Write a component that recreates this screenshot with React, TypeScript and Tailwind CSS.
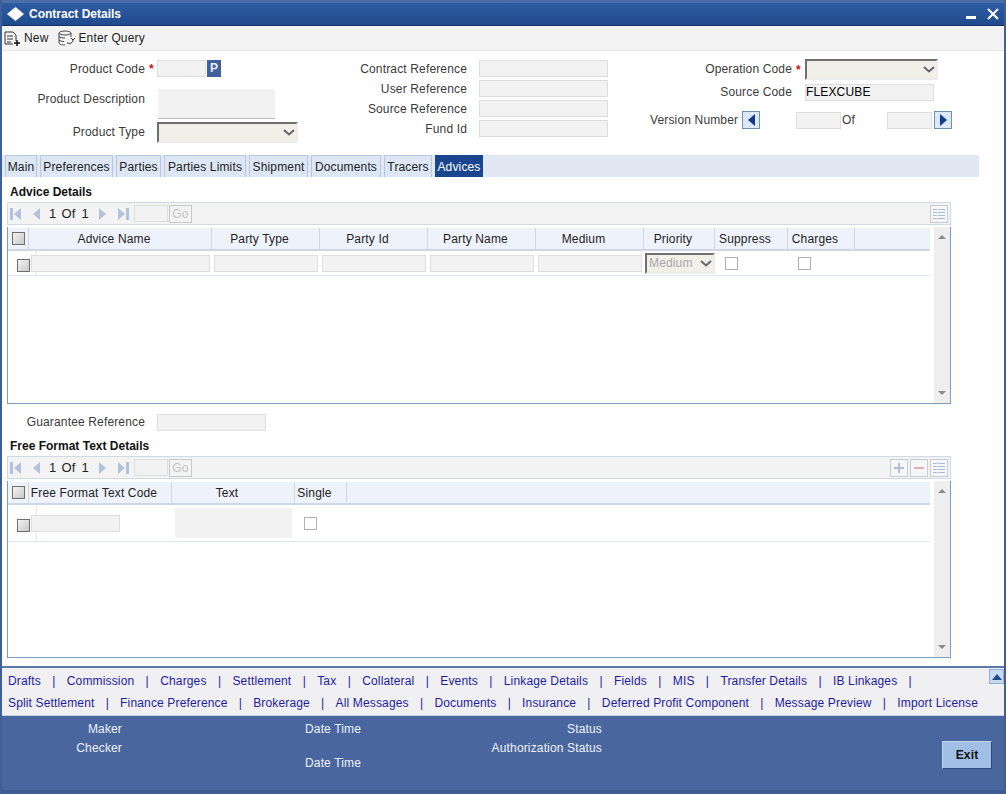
import type { ReactNode } from "react";

const tabs = [
  { label: "Main", w: "w-[32px]" },
  { label: "Preferences", w: "w-[73px]" },
  { label: "Parties", w: "w-[45px]" },
  { label: "Parties Limits", w: "w-[82px]" },
  { label: "Shipment", w: "w-[59px]" },
  { label: "Documents", w: "w-[70px]" },
  { label: "Tracers", w: "w-[48px]" },
  { label: "Advices", w: "w-[48px]" },
];
const linksOne = ["Drafts", "Commission", "Charges", "Settlement", "Tax", "Collateral", "Events", "Linkage Details", "Fields", "MIS", "Transfer Details", "IB Linkages"];
const linksTwo = ["Split Settlement", "Finance Preference", "Brokerage", "All Messages", "Documents", "Insurance", "Deferred Profit Component", "Message Preview", "Import License"];

function Input({ className = "", children }: { className?: string; children?: ReactNode }) {
  return (
    <div className={`h-[17px] shrink-0 bg-[#f2f2f2] border border-[#dedede] text-black leading-[15px] ${className}`}>
      {children}
    </div>
  );
}

function Chevron({ color = "#666" }: { color?: string }) {
  return (
    <svg width="12" height="7" viewBox="0 0 12 7" className="shrink-0">
      <path d="M1 1l5 4.5L11 1" fill="none" stroke={color} strokeWidth="2" />
    </svg>
  );
}

function Select({ className = "", children }: { className?: string; children?: ReactNode }) {
  return (
    <div className={`shrink-0 flex items-center justify-end bg-[#f1efe8] border-t-2 border-l-2 border-t-[#6f6f6f] border-l-[#6f6f6f] border-b-2 border-r-2 border-b-[#ececec] border-r-[#ececec] pr-[1px] ${className}`}>
      {children}
      <Chevron />
    </div>
  );
}

function Star() {
  return <span className="w-[6px] text-[#d01010] font-bold leading-none">*</span>;
}

function Check({ shaded = false, className = "" }: { shaded?: boolean; className?: string }) {
  return (
    <div
      className={`w-[13px] h-[13px] shrink-0 border ${shaded ? "border-[#6e6e6e] bg-gradient-to-br from-[#f4f4f4] to-[#c8c8c8]" : "border-[#b0b0b0] bg-white"} ${className}`}
    />
  );
}

function NavGlyph({ d }: { d: string }) {
  return (
    <svg width="12" height="14" viewBox="0 0 12 14" className="shrink-0">
      <path d={d} fill="#b3c2dc" />
    </svg>
  );
}

function GridIcon() {
  return (
    <div className="w-[18px] h-[18px] border border-[#c6ccd6] bg-[#f6f6f6] flex items-center justify-center">
      <svg width="14" height="12" viewBox="0 0 14 12">
        <path d="M1 1h4v1H1zM6 1h7v1H6zM1 4h4v1H1zM6 4h7v1H6zM1 7h4v1H1zM6 7h7v1H6zM1 10h4v1H1zM6 10h7v1H6z" fill="#a9b8d3" />
      </svg>
    </div>
  );
}

function ToolButton({ path, color }: { path: string; color: string }) {
  return (
    <div className="w-[18px] h-[18px] border border-[#c6ccd6] bg-[#f6f6f6] flex items-center justify-center">
      <svg width="12" height="12" viewBox="0 0 12 12">
        <path d={path} fill={color} />
      </svg>
    </div>
  );
}

function NavBar({ edit = false }: { edit?: boolean }) {
  return (
    <div className="h-[23px] w-[944px] flex items-center bg-[#f3f3f3] border border-[#d3d9e3] pl-[2px] pr-[2px]">
      <NavGlyph d="M0 1h3v12H0zM11 1v12L4 7z" />
      <div className="w-[8px]" />
      <NavGlyph d="M10 1v12L3 7z" />
      <span className="ml-[7px] text-[13px] text-[#222]">1</span>
      <span className="ml-[5px] text-[13px] text-[#222]">Of</span>
      <span className="ml-[6px] text-[13px] text-[#222]">1</span>
      <div className="w-[8px]" />
      <NavGlyph d="M2 1v12l7-6z" />
      <div className="w-[8px]" />
      <NavGlyph d="M1 1v12l7-6zM9 1h3v12H9z" />
      <div className="ml-[5px] w-[34px] h-[17px] bg-[#f2f2f2] border border-[#dedede]" />
      <div className="ml-[1px] w-[23px] h-[18px] border border-[#c9c9c9] flex items-center justify-center text-[#c4c4c4]">Go</div>
      <div className="ml-auto flex gap-[2px]">
        {edit && <ToolButton path="M5 1h2v4h4v2H7v4H5V7H1V5h4z" color="#aebcd6" />}
        {edit && <ToolButton path="M1 5h10v2H1z" color="#e0b0b0" />}
        <GridIcon />
      </div>
    </div>
  );
}

function TableFrame({ head, children }: { head: { label: string; w: string }[]; children: ReactNode }) {
  return (
    <div className="mt-[2px] w-[944px] h-[177px] border-l border-r border-b border-[#7f9dc2] flex">
      <div className="w-[922px] shrink-0 flex flex-col">
        <div className="mt-[1px] h-[23px] flex bg-[#eef2fb] border-b-2 border-[#cfd7e7]">
          <div className="w-[21px] shrink-0 border-r border-[#cfd7e7] flex items-center justify-center">
            <Check shaded />
          </div>
          {head.map((h) => (
            <div key={h.label} className={`${h.w} shrink-0 border-r border-[#cfd7e7] pr-[12px] text-center leading-[22px] text-[#222] whitespace-nowrap`}>
              {h.label}
            </div>
          ))}
        </div>
        {children}
      </div>
      <div className="ml-[4px] w-[16px] flex flex-col items-center justify-between py-[8px] bg-[#eeeeee]">
        <div className="w-0 h-0 border-x-[4px] border-x-transparent border-b-[4px] border-b-[#8a8a8a]" />
        <div className="w-0 h-0 border-x-[4px] border-x-transparent border-t-[4px] border-t-[#8a8a8a]" />
      </div>
    </div>
  );
}

function LinkRow({ items, className = "" }: { items: string[]; className?: string }) {
  return (
    <div className={`flex items-center text-[#1c1c9e] h-[22px] whitespace-nowrap ${className}`}>
      {items.map((t, i) => (
        <span key={t} className="flex items-center gap-[inherit]">
          <span>{t}</span>
          {(i < items.length - 1 || items === linksOne) && <span>|</span>}
        </span>
      ))}
    </div>
  );
}

export default function App() {
  return (
    <div className="w-[1006px] h-[794px] flex flex-col overflow-hidden bg-white border-x-2 border-[#3f5f9b] text-[12px] tracking-[0.15px] text-[#3a3a3a] font-['Liberation_Sans',Arial,sans-serif]">
      {/* title bar */}
      <div className="h-[26px] shrink-0 -mx-[2px] px-[7px] flex items-center bg-gradient-to-b from-[#2f5da3] to-[#1f4a8e] border-t-[3px] border-t-[#4a6ea8] border-b border-b-[#15315f]">
        <svg width="17" height="14" viewBox="0 0 17 14">
          <path d="M8.5 0l8.5 7-8.5 7L0 7z" fill="#fff" />
        </svg>
        <span className="ml-[5px] font-bold text-white tracking-normal">Contract Details</span>
        <div className="ml-auto flex items-center gap-[11px]">
          <div className="mt-[6px] w-[10px] h-[3px] bg-white" />
          <svg width="12" height="12" viewBox="0 0 12 12">
            <path d="M1 1l10 10M11 1L1 11" stroke="#fff" strokeWidth="2" />
          </svg>
        </div>
      </div>

      {/* toolbar */}
      <div className="h-[25px] shrink-0 flex items-center bg-[#f3f3f3] border-b border-[#e6e6e6] pl-[2px] text-[#222]">
        <svg width="17" height="15" viewBox="0 0 17 15">
          <path d="M1 1h8l3 3v6M1 1v12h8M3 5h6M3 8h6M3 11h4" fill="none" stroke="#333" />
          <path d="M13 9v6M10 12h6" stroke="#111" strokeWidth="1.5" />
        </svg>
        <span className="ml-[3px]">New</span>
        <svg width="18" height="16" viewBox="0 0 18 16" className="ml-[9px]">
          <ellipse cx="8" cy="3" rx="6" ry="2" fill="none" stroke="#444" />
          <path d="M2 3v10c0 1 2 2 6 2M14 3v4M2 6.5c1 1 3 1.5 6 1.5M2 10c1 1 3 1.5 5 1.5" fill="none" stroke="#444" />
          <path d="M10 13c3 1 6 0 6-3M14 8l2 2 2-2" fill="none" stroke="#333" />
        </svg>
        <span className="ml-[3px]">Enter Query</span>
      </div>

      {/* header form */}
      <div className="h-[104px] shrink-0 flex">
        <div className="w-[296px] shrink-0 flex flex-col pt-[9px]">
          <div className="flex items-center h-[17px]">
            <span className="w-[143px] text-right">Product Code</span>
            <span className="w-[12px] pl-[4px]"><Star /></span>
            <Input className="w-[49px]" />
            <div className="ml-[1px] w-[14px] h-[17px] bg-[#40619d] text-[#e8edf6] text-center font-bold leading-[17px]">P</div>
          </div>
          <div className="mt-[12px] flex">
            <span className="w-[143px] text-right mt-[1px]">Product Description</span>
            <div className="ml-[13px] w-[117px] h-[30px] bg-[#f2f2f2] border-b border-[#bdbdbd]" />
          </div>
          <div className="mt-[3px] flex items-center">
            <span className="w-[143px] text-right pb-[2px]">Product Type</span>
            <Select className="ml-[12px] w-[141px] h-[21px]" />
          </div>
        </div>
        <div className="w-[310px] shrink-0 flex flex-col pt-[9px] gap-[3px]">
          {["Contract Reference", "User Reference", "Source Reference", "Fund Id"].map((l) => (
            <div key={l} className="flex items-center h-[17px]">
              <span className="w-[171px] text-right">{l}</span>
              <Input className="ml-[12px] w-[129px]" />
            </div>
          ))}
        </div>
        <div className="flex-1 flex flex-col pt-[8px]">
          <div className="flex items-center">
            <span className="w-[184px] text-right pb-[2px]">Operation Code</span>
            <span className="w-[13px] pl-[4px]"><Star /></span>
            <Select className="w-[133px] h-[21px]" />
          </div>
          <div className="mt-[3px] flex items-center">
            <span className="w-[184px] text-right">Source Code</span>
            <Input className="ml-[13px] w-[129px]">FLEXCUBE</Input>
          </div>
          <div className="mt-[10px] flex items-center pl-[42px]">
            <span className="w-[90px] whitespace-nowrap">Version Number</span>
            <div className="ml-[2px] w-[18px] h-[18px] bg-[#dce8f5] border border-[#6d8fb8] flex items-center justify-center">
              <div className="w-0 h-0 border-y-[6px] border-y-transparent border-r-[7px] border-r-[#123c8c]" />
            </div>
            <Input className="ml-[36px] w-[45px]" />
            <span className="ml-[1px] w-[45px]">Of</span>
            <Input className="w-[45px]" />
            <div className="ml-[2px] w-[18px] h-[18px] bg-[#dce8f5] border border-[#6d8fb8] flex items-center justify-center">
              <div className="w-0 h-0 border-y-[6px] border-y-transparent border-l-[7px] border-l-[#123c8c]" />
            </div>
          </div>
        </div>
      </div>

      {/* tabs */}
      <div className="h-[22px] w-[977px] shrink-0 flex gap-[3px] pl-[3px] bg-[#e1e8f4]">
        {tabs.map((t) => (
          <div
            key={t.label}
            className={`${t.w} text-center leading-[22px] border-x border-t whitespace-nowrap ${t.label === "Advices" ? "bg-[#1a4690] border-[#1a4690] text-white" : "bg-[#dce6f5] border-[#b7c7e0] text-[#222]"}`}
          >
            {t.label}
          </div>
        ))}
      </div>

      {/* advice details */}
      <div className="pl-[5px] flex flex-col shrink-0">
        <div className="mt-[8px] ml-[3px] h-[15px] leading-[15px] font-bold text-[#111] tracking-normal">Advice Details</div>
        <div className="mt-[2px]"><NavBar /></div>
        <TableFrame
          head={[
            { label: "Advice Name", w: "w-[183px]" },
            { label: "Party Type", w: "w-[108px]" },
            { label: "Party Id", w: "w-[108px]" },
            { label: "Party Name", w: "w-[108px]" },
            { label: "Medium", w: "w-[108px]" },
            { label: "Priority", w: "w-[71px]" },
            { label: "Suppress", w: "w-[73px]" },
            { label: "Charges", w: "w-[67px]" },
          ]}
        >
          <div className="h-[25px] flex items-center border-b border-[#dfe6f0]">
            <div className="w-[29px] h-full shrink-0 border-r border-[#e3e9f3] flex items-center pl-[9px]">
              <Check shaded className="mt-[4px]" />
            </div>
            <Input className="-ml-[6px] w-[179px]" />
            <Input className="ml-[4px] w-[104px]" />
            <Input className="ml-[4px] w-[104px]" />
            <Input className="ml-[4px] w-[104px]" />
            <Input className="ml-[4px] w-[104px]" />
            <Select className="ml-[3px] w-[70px] h-[21px] pl-[2px]">
              <span className="mr-auto text-[#a8a8a8]">Medium</span>
            </Select>
            <Check className="ml-[10px]" />
            <Check className="ml-[60px]" />
          </div>
        </TableFrame>

        <div className="mt-[9px] flex items-center">
          <span className="w-[138px] text-right">Guarantee Reference</span>
          <Input className="ml-[12px] w-[109px]" />
        </div>

        <div className="mt-[8px] ml-[3px] h-[15px] leading-[15px] font-bold text-[#111] tracking-normal">Free Format Text Details</div>
        <div className="mt-[2px]"><NavBar edit /></div>
        <TableFrame
          head={[
            { label: "Free Format Text Code", w: "w-[143px]" },
            { label: "Text", w: "w-[123px]" },
            { label: "Single", w: "w-[52px]" },
          ]}
        >
          <div className="h-[37px] flex items-center border-b border-[#dfe6f0]">
            <div className="w-[29px] h-full shrink-0 border-r border-[#e3e9f3] flex items-center pl-[9px]">
              <Check shaded className="mt-[4px]" />
            </div>
            <Input className="-ml-[6px] w-[89px]" />
            <div className="ml-[55px] w-[117px] h-[30px] bg-[#f2f2f2]" />
            <Check className="ml-[12px] mt-[1px]" />
          </div>
        </TableFrame>
      </div>

      {/* links */}
      <div className="mt-[8px] h-[49px] shrink-0 flex bg-[#f0f0f2] border-t-2 border-[#5c7aa8]">
        <div className="flex-1 pl-[6px] pt-[2px] flex flex-col">
          <LinkRow items={linksOne} className="gap-[11.3px]" />
          <LinkRow items={linksTwo} className="gap-[11.2px]" />
        </div>
        <div className="mt-[1px] w-[15px] h-[15px] shrink-0 bg-[#c8daf0] border border-[#8fb0d6] flex items-center justify-center">
          <div className="w-0 h-0 border-x-[5px] border-x-transparent border-b-[6px] border-b-[#1f4a8e]" />
        </div>
      </div>

      {/* audit footer */}
      <div className="flex-1 flex bg-[#49669e] border-t border-[#c7d3e6] border-b-[4px] border-b-[#3f5c93] text-[#eef2f8]">
        <div className="w-[120px] shrink-0 flex flex-col items-end pt-[6px] gap-[4px] leading-[15px]">
          <span>Maker</span>
          <span>Checker</span>
        </div>
        <div className="ml-[183px] w-[120px] shrink-0 flex flex-col pt-[6px] gap-[19px] leading-[15px]">
          <span>Date Time</span>
          <span>Date Time</span>
        </div>
        <div className="w-[177px] shrink-0 flex flex-col items-end pt-[6px] gap-[4px] leading-[15px]">
          <span>Status</span>
          <span>Authorization Status</span>
        </div>
        <div className="ml-auto mr-[12px] mt-[25px] w-[50px] h-[28px] bg-[#a1bee5] border-t border-l border-[#c3d6ef] border-b border-r border-b-[#2f4a7c] border-r-[#2f4a7c] font-bold text-[#111] text-center leading-[26px]">
          Exit
        </div>
      </div>
    </div>
  );
}
